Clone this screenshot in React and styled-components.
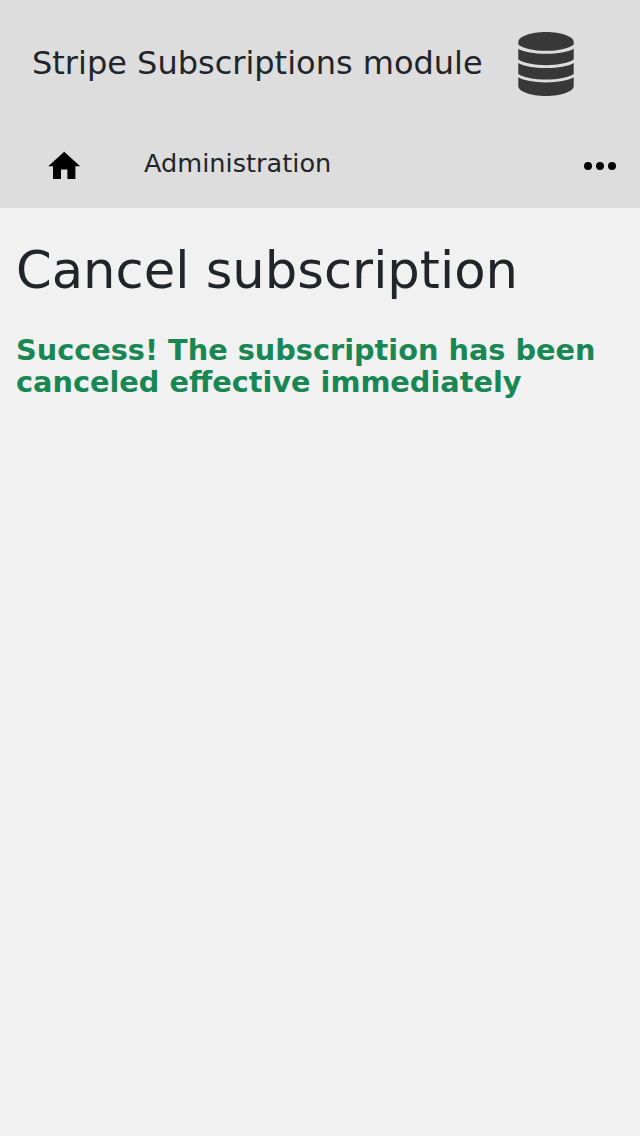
import React from 'react';
import styled, { createGlobalStyle } from 'styled-components';

const GlobalStyle = createGlobalStyle`
  body {
    margin: 0;
    background: #f1f1f1;
    color: #212529;
    font-family: "DejaVu Sans", sans-serif;
  }
`;

const Header = styled.header`
  height: 208px;
  background: #ddd;
`;

const Brand = styled.div`
  display: flex;
  align-items: center;
  height: 128px;
  padding-left: 32px;
  box-sizing: border-box;
`;

const BrandName = styled.span`
  width: 486px;
  margin-top: -2px;
  font-size: 32px;
  line-height: 48px;
  white-space: nowrap;
`;

const DatabaseIcon = styled.svg`
  display: block;
  flex: none;
  width: 56px;
  height: 64px;
  fill: #383838;
`;

const Nav = styled.nav`
  display: flex;
  align-items: center;
  height: 80px;
  padding: 0 16px 0 44.8px;
  box-sizing: border-box;
`;

const NavLabel = styled.span`
  flex: 1;
  margin: 0 0 10px 60.8px;
  font-size: 25.6px;
  line-height: 38px;
`;

const NavIcon = styled.svg`
  display: block;
  flex: none;
  width: ${(p) => p.$size}px;
  height: ${(p) => p.$size}px;
  margin-bottom: ${(p) => p.$lift}px;
`;

const Main = styled.main`
  padding: 32px 16px 0;
`;

const Title = styled.h1`
  margin: 0 0 33px;
  font-size: 51.2px;
  font-weight: 400;
  line-height: 61px;
`;

const Success = styled.div`
  color: #198754;
  font-size: 28.75px;
  font-weight: 700;
  line-height: 32px;
`;

export default function App() {
  return (
    <>
      <GlobalStyle />
      <Header>
        <Brand>
          <BrandName>Stripe Subscriptions module</BrandName>
          <DatabaseIcon viewBox="0 0 56 64">
            <path d="M.3 10C.3 4.5 12.7 0 28 0s27.7 4.5 27.7 10v2.4C52 16 41 18.8 28 18.8S4 16 .3 12.4z" />
            <path d="M.3 16.7C6 20 16 21.8 28 21.8s22-1.8 27.7-5.1v10.9C51 31 40 33.2 28 33.2S5 31 .3 27.6z" />
            <path d="M.3 31C6 34.3 16 36.1 28 36.1s22-1.8 27.7-5.1v10.9C51 45.3 40 47.5 28 47.5S5 45.3.3 41.9z" />
            <path d="M.3 45.3C6 48.6 16 50.4 28 50.4s22-1.8 27.7-5.1V54c0 5.5-12.4 10-27.7 10S.3 59.5.3 54z" />
          </DatabaseIcon>
        </Brand>
        <Nav>
          <NavIcon viewBox="0 0 24 24" $size={38.4} $lift={3}>
            <path d="M10 20v-6h4v6h5v-8h3L12 3 2 12h3v8z" />
          </NavIcon>
          <NavLabel>Administration</NavLabel>
          <NavIcon viewBox="0 0 24 24" $size={48} $lift={4}>
            <path d="M6 10a2 2 0 1 0 0 4 2 2 0 0 0 0-4zm12 0a2 2 0 1 0 0 4 2 2 0 0 0 0-4zm-6 0a2 2 0 1 0 0 4 2 2 0 0 0 0-4z" />
          </NavIcon>
        </Nav>
      </Header>
      <Main>
        <Title>Cancel subscription</Title>
        <Success>Success! The subscription has been canceled effective immediately</Success>
      </Main>
    </>
  );
}
